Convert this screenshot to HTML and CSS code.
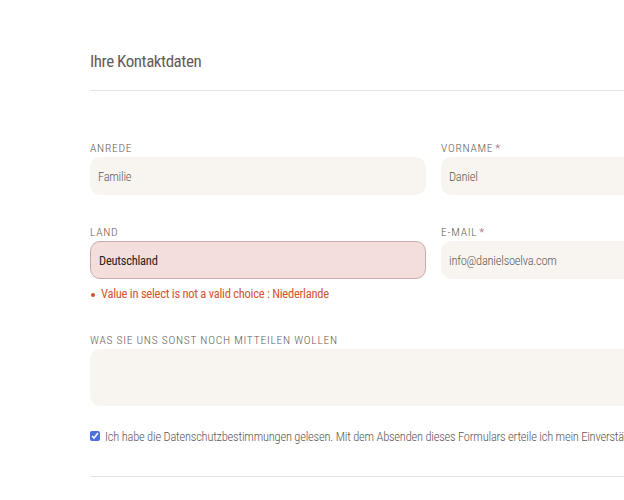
FILE: index.html
```html
<!DOCTYPE html>
<html lang="de">
<head>
<meta charset="utf-8">
<title>Ihre Kontaktdaten</title>
<link rel="stylesheet" href="styles.css">
</head>
<body>
<div class="page">
  <div class="head">
    <h2 class="title">Ihre Kontaktdaten</h2>
  </div>
  <form class="form">
    <div class="field">
      <label class="label">Anrede</label>
      <div class="input">Familie</div>
    </div>
    <div class="field">
      <label class="label">Vorname<span class="req">*</span></label>
      <div class="input">Daniel</div>
    </div>
    <div class="field">
      <label class="label">Land</label>
      <div class="input input-error">Deutschland</div>
      <ul class="errors"><li>Value in select is not a valid choice : Niederlande</li></ul>
    </div>
    <div class="field">
      <label class="label">E-Mail<span class="req">*</span></label>
      <div class="input">info@danielsoelva.com</div>
    </div>
    <div class="field wide">
      <label class="label">Was Sie uns sonst noch mitteilen wollen</label>
      <div class="input textarea"></div>
    </div>
    <div class="check wide">
      <input type="checkbox" class="box" checked>
      <span class="check-text">Ich habe die Datenschutzbestimmungen gelesen. Mit dem Absenden dieses Formulars erteile ich mein Einverständnis zur Verarbeitung meiner Daten.</span>
    </div>
  </form>
  <div class="foot"></div>
</div>
</body>
</html>
```
FILE: styles.css
```css
html, body {
  margin: 0;
  padding: 0;
  overflow: hidden;
  background: #fff;
}
body {
  font-family: "Roboto Condensed", "Liberation Sans Narrow", "DejaVu Sans Condensed", Roboto, sans-serif;
  font-stretch: condensed;
  font-weight: 300;
  color: #5f5654;
}
.page {
  width: 687px;
  padding-left: 90px;
}
.head {
  height: 40px;
  padding-top: 50px;
  border-bottom: 1px solid #e3e3e3;
  width: 700px;
}
.title {
  margin: 0;
  font-size: 17px;
  line-height: 22px;
  font-weight: 400;
  letter-spacing: -0.45px;
  color: #665b58;
}
.form {
  margin-top: 48px;
  display: grid;
  grid-template-columns: 336px 336px;
  column-gap: 15px;
  row-gap: 28px;
}
.field {
  display: flex;
  flex-direction: column;
}
.wide {
  grid-column: 1 / -1;
}
.label {
  font-size: 11.5px;
  line-height: 16px;
  padding-top: 1px;
  letter-spacing: 0.75px;
  text-transform: uppercase;
  color: #655b58;
  margin-bottom: 1px;
}
.req {
  color: #a06a6a;
  margin-left: 2px;
}
.input {
  height: 38px;
  box-sizing: border-box;
  border-radius: 10px;
  background: #f8f5f1;
  padding: 0 8px;
  display: flex;
  align-items: center;
  font-size: 12.5px;
  letter-spacing: -0.25px;
  color: #5f5754;
}
.input-error {
  background: #f3dedc;
  border: 1px solid #c5acab;
  color: #2a2220;
  font-weight: 400;
}
.textarea {
  height: 57px;
}
.errors {
  margin: 6px 0 0;
  padding: 0;
  list-style: none;
}
.errors li {
  position: relative;
  padding-left: 11px;
  font-size: 12.5px;
  line-height: 18px;
  letter-spacing: -0.25px;
  font-weight: 400;
  color: #d4532d;
}
.errors li::before {
  content: "";
  position: absolute;
  left: 1px;
  top: 8px;
  width: 4px;
  height: 4px;
  border-radius: 50%;
  background: #d4532d;
}
.check {
  margin-top: -8px;
  display: flex;
  align-items: center;
  gap: 5px;
  height: 20px;
  white-space: nowrap;
}
.box {
  margin: 0;
  width: 10px;
  height: 10px;
  accent-color: #4a6fe3;
}
.check-text {
  font-size: 12.5px;
  letter-spacing: -0.22px;
  color: #5f5654;
}
.foot {
  margin-top: 30px;
  border-top: 1px solid #e3e3e3;
  width: 700px;
}
```
